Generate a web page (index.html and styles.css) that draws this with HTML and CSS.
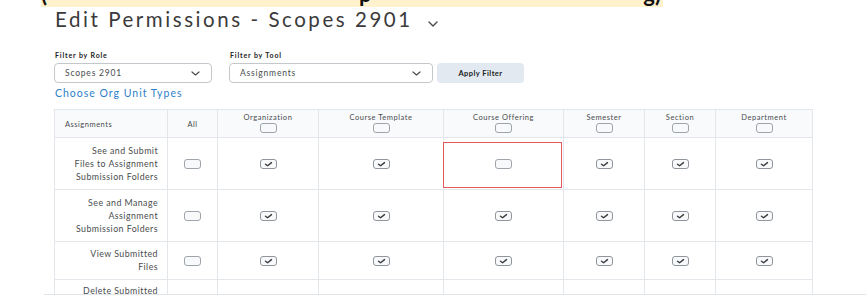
FILE: index.html
```html
<!DOCTYPE html>
<html lang="en">
<head>
<meta charset="utf-8">
<title>Edit Permissions - Scopes 2901</title>
<link rel="stylesheet" href="styles.css">
</head>
<body>
<div class="band"><div class="band-text"><span>(</span><span>p</span><span>g)</span></div></div>
<header class="title-row">
  <h1 class="title">Edit Permissions - Scopes 2901</h1>
  <svg class="title-chev" width="10" height="6" viewBox="0 0 10 6"><polyline points="1,1 5,5 9,1" fill="none" stroke="#494c4e" stroke-width="1.4" stroke-linecap="round" stroke-linejoin="round"/></svg>
</header>
<div class="filters">
  <div class="field field-role">
    <div class="field-label">Filter by Role</div>
    <div class="select"><span>Scopes 2901</span><svg width="9" height="5" viewBox="0 0 9 5"><polyline points="1,1 4.5,4 8,1" fill="none" stroke="#494c4e" stroke-width="1.2" stroke-linecap="round" stroke-linejoin="round"/></svg></div>
  </div>
  <div class="field field-tool">
    <div class="field-label">Filter by Tool</div>
    <div class="select"><span>Assignments</span><svg width="9" height="5" viewBox="0 0 9 5"><polyline points="1,1 4.5,4 8,1" fill="none" stroke="#494c4e" stroke-width="1.2" stroke-linecap="round" stroke-linejoin="round"/></svg></div>
  </div>
  <button class="apply">Apply Filter</button>
</div>
<div class="link-row"><a class="org-link" href="#">Choose Org Unit Types</a></div>
<div class="grid-wrap">
  <table class="grid">
    <colgroup>
      <col class="c-name"><col class="c-all"><col class="c-org"><col class="c-tpl"><col class="c-off"><col class="c-sem"><col class="c-sec"><col class="c-dep">
    </colgroup>
    <thead>
      <tr>
        <th class="h-name">Assignments</th>
        <th class="h-all">All</th>
        <th><div class="h-label">Organization</div><span class="cb"></span></th>
        <th><div class="h-label">Course Template</div><span class="cb"></span></th>
        <th><div class="h-label">Course Offering</div><span class="cb"></span></th>
        <th><div class="h-label">Semester</div><span class="cb"></span></th>
        <th><div class="h-label">Section</div><span class="cb"></span></th>
        <th><div class="h-label">Department</div><span class="cb"></span></th>
      </tr>
    </thead>
    <tbody>
      <tr class="r-tall">
        <td class="name">See and Submit<br>Files to Assignment<br>Submission Folders</td>
        <td><span class="cb"></span></td>
        <td><span class="cb on"><svg viewBox="0 0 17 10"><polyline points="5.5,5.2 7.6,6.8 11.5,3.6"/></svg></span></td>
        <td><span class="cb on"><svg viewBox="0 0 17 10"><polyline points="5.5,5.2 7.6,6.8 11.5,3.6"/></svg></span></td>
        <td class="flagged"><span class="cb"></span></td>
        <td><span class="cb on"><svg viewBox="0 0 17 10"><polyline points="5.5,5.2 7.6,6.8 11.5,3.6"/></svg></span></td>
        <td><span class="cb on"><svg viewBox="0 0 17 10"><polyline points="5.5,5.2 7.6,6.8 11.5,3.6"/></svg></span></td>
        <td><span class="cb on"><svg viewBox="0 0 17 10"><polyline points="5.5,5.2 7.6,6.8 11.5,3.6"/></svg></span></td>
      </tr>
      <tr class="r-tall">
        <td class="name">See and Manage<br>Assignment<br>Submission Folders</td>
        <td><span class="cb"></span></td>
        <td><span class="cb on"><svg viewBox="0 0 17 10"><polyline points="5.5,5.2 7.6,6.8 11.5,3.6"/></svg></span></td>
        <td><span class="cb on"><svg viewBox="0 0 17 10"><polyline points="5.5,5.2 7.6,6.8 11.5,3.6"/></svg></span></td>
        <td><span class="cb on"><svg viewBox="0 0 17 10"><polyline points="5.5,5.2 7.6,6.8 11.5,3.6"/></svg></span></td>
        <td><span class="cb on"><svg viewBox="0 0 17 10"><polyline points="5.5,5.2 7.6,6.8 11.5,3.6"/></svg></span></td>
        <td><span class="cb on"><svg viewBox="0 0 17 10"><polyline points="5.5,5.2 7.6,6.8 11.5,3.6"/></svg></span></td>
        <td><span class="cb on"><svg viewBox="0 0 17 10"><polyline points="5.5,5.2 7.6,6.8 11.5,3.6"/></svg></span></td>
      </tr>
      <tr>
        <td class="name">View Submitted<br>Files</td>
        <td><span class="cb"></span></td>
        <td><span class="cb on"><svg viewBox="0 0 17 10"><polyline points="5.5,5.2 7.6,6.8 11.5,3.6"/></svg></span></td>
        <td><span class="cb on"><svg viewBox="0 0 17 10"><polyline points="5.5,5.2 7.6,6.8 11.5,3.6"/></svg></span></td>
        <td><span class="cb on"><svg viewBox="0 0 17 10"><polyline points="5.5,5.2 7.6,6.8 11.5,3.6"/></svg></span></td>
        <td><span class="cb on"><svg viewBox="0 0 17 10"><polyline points="5.5,5.2 7.6,6.8 11.5,3.6"/></svg></span></td>
        <td><span class="cb on"><svg viewBox="0 0 17 10"><polyline points="5.5,5.2 7.6,6.8 11.5,3.6"/></svg></span></td>
        <td><span class="cb on"><svg viewBox="0 0 17 10"><polyline points="5.5,5.2 7.6,6.8 11.5,3.6"/></svg></span></td>
      </tr>
      <tr class="r-last">
        <td class="name">Delete Submitted<br>Files</td>
        <td><span class="cb"></span></td>
        <td><span class="cb on"></span></td>
        <td><span class="cb on"></span></td>
        <td><span class="cb on"></span></td>
        <td><span class="cb on"></span></td>
        <td><span class="cb on"></span></td>
        <td><span class="cb on"></span></td>
      </tr>
    </tbody>
  </table>
</div>
</body>
</html>
```

FILE: styles.css
```css
* { box-sizing: border-box; }
html, body { margin: 0; padding: 0; background: #fff; }
body { font-family: Lato, "Open Sans", sans-serif; color: #494c4e; width: 866px; height: 305px; overflow: hidden; }

.band { margin-left: 41px; width: 622px; height: 7px; background: #fff2cc; overflow: hidden; }
.band-text { display: flex; justify-content: space-between; margin-top: -17px; padding: 0 2px 0 0; font-size: 22px; line-height: 22px; font-weight: 700; color: #111; }
.band-text span:nth-child(2) { margin-left: 40px; }

.title-row { display: flex; align-items: center; height: 24px; padding-left: 55px; }
.title { margin: 0; font-size: 20.5px; line-height: 24px; font-weight: 400; color: #3b3b3b; letter-spacing: 2.55px; }
.title-chev { margin-left: 15px; margin-top: 10px; }

.filters { display: flex; align-items: flex-end; padding-left: 54px; margin-top: 19px; }
.field { display: flex; flex-direction: column; }
.field-role { width: 158px; }
.field-tool { width: 204px; margin-left: 17px; }
.field-label { font-size: 7px; line-height: 10px; font-weight: 700; color: #202122; letter-spacing: 0.85px; padding-left: 1px; margin-bottom: 3px; }
.select { height: 20px; border: 1px solid #c4c8cc; border-radius: 4px; display: flex; align-items: center; justify-content: space-between; padding: 0 11px 0 10px; font-size: 8.5px; letter-spacing: 0.8px; color: #494c4e; }
.apply { margin-left: 4px; width: 87px; height: 20px; border: none; border-radius: 4px; background: #e3e9f1; font-family: inherit; font-size: 7.5px; font-weight: 700; color: #202122; letter-spacing: 0.45px; padding: 0; }

.link-row { padding-left: 55px; margin-top: 3px; height: 14px; font-size: 10.5px; line-height: 14px; }
.org-link { color: #2d7fc9; text-decoration: none; letter-spacing: 1px; }

.grid-wrap { margin-left: 44px; margin-top: 9px; height: 186px; overflow: hidden; border-bottom: 1px solid #e1e4e8; }
.grid { margin-left: 10px; border-collapse: collapse; table-layout: fixed; width: 758px; }
.c-name { width: 113px; } .c-all { width: 50px; } .c-org { width: 101px; } .c-tpl { width: 125px; }
.c-off { width: 120px; } .c-sem { width: 81px; } .c-sec { width: 71px; } .c-dep { width: 97px; }

.grid th, .grid td { border: 1px solid #e3e6ea; padding: 0; text-align: center; }
.grid thead th { background: #f9fafc; height: 28px; vertical-align: top; font-weight: 400; padding-top: 3px; font-size: 7.5px; line-height: 10px; }
.grid thead th.h-name, .grid thead th.h-all { vertical-align: middle; padding-top: 2px; letter-spacing: 0.5px; color: #494c4e; }
.grid thead th.h-name { text-align: left; padding-left: 10px; }
.h-label { letter-spacing: 0.55px; color: #494c4e; }
.grid thead th .cb { display: block; margin: 0 auto; }

.grid td { vertical-align: middle; font-size: 8px; line-height: 10px; }
.grid td.name { text-align: right; padding: 5px 9px 6px 4px; font-size: 8.8px; line-height: 13px; letter-spacing: 0.45px; color: #494c4e; }
.grid tr.r-tall td { height: 52px; }
.grid tr.r-last td { height: 39px; }
.grid tr.r-last td.name { vertical-align: top; padding-top: 4px; }

.cb { display: inline-block; width: 17px; height: 10px; border: 1px solid #9ea4aa; border-radius: 3px; background: #f8f9fb; vertical-align: middle; position: relative; }
.cb svg { position: absolute; left: -1px; top: -1px; width: 17px; height: 10px; }
.cb svg polyline { fill: none; stroke: #3a3c3e; stroke-width: 1.4; stroke-linecap: round; stroke-linejoin: round; }
.cb.on { border-color: #8f959b; }

.grid td.flagged { position: relative; }
.grid td.flagged::after { content: ""; position: absolute; left: -1px; right: 1px; top: 4px; bottom: 1px; border: 1.5px solid #e5595b; }
```
